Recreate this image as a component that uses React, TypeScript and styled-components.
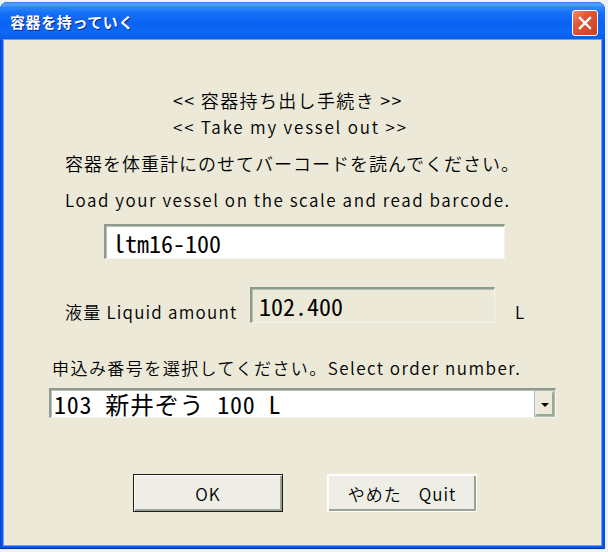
import React from "react";
import styled, { createGlobalStyle } from "styled-components";

const UI_FONT = `"Noto Sans CJK JP", "Noto Sans", sans-serif`;
const MONO_FONT = `"Noto Sans Mono CJK JP", "Noto Sans CJK JP", "Liberation Mono", monospace`;
const LABEL_WEIGHT = 350;

const GlobalStyle = createGlobalStyle`
  html, body { margin: 0; padding: 0; background: #eef1f5; }
  body { width: 608px; height: 552px; overflow: hidden; font-family: ${UI_FONT}; }
`;

const Window = styled.div`
  margin-top: 2px;
  width: 605px;
  height: 547px;
  box-sizing: border-box;
  display: flex;
  flex-direction: column;
  background: #0b56ee;
  border-radius: 8px 8px 0 0;
  box-shadow: inset 1px 0 #0a3fd0, inset -1px 0 #0a3fd0, inset 0 -1px #0030b8;
`;

const TitleBar = styled.div`
  height: 38px;
  flex: none;
  box-sizing: border-box;
  display: flex;
  align-items: center;
  justify-content: space-between;
  padding: 0 7px 0 10px;
  border-radius: 8px 8px 0 0;
  background: linear-gradient(
    to bottom,
    #2a7cf6 0%,
    #56a4ff 6%,
    #2d87fb 14%,
    #136ff6 30%,
    #0a63f2 55%,
    #0d68f5 80%,
    #0a5ae6 100%
  );
`;

const TitleText = styled.span`
  color: #fff;
  font-family: ${UI_FONT};
  font-weight: 700;
  font-size: 15px;
  letter-spacing: 0.6px;
  text-shadow: 1px 1px 0 #0a2a8c;
`;

const CloseButton = styled.div`
  width: 26px;
  height: 26px;
  box-sizing: border-box;
  margin-top: 4px;
  border: 1px solid #fff;
  border-radius: 3px;
  display: flex;
  align-items: center;
  justify-content: center;
  background: linear-gradient(135deg, #f08a6c 0%, #e0583a 35%, #cc4020 100%);
`;

const Client = styled.div`
  flex: 1;
  margin: 0 4px 4px 4px;
  background: #ece9d8;
  box-shadow: 0 0 0 1px #6ea0f6;
  display: flex;
  flex-direction: column;
  padding-top: 48px;
  box-sizing: border-box;
`;

const Heading = styled.div<{ $size: number; $spacing: number; $mt: number; $lh: number }>`
  padding-left: 169px;
  margin-top: ${(p) => p.$mt}px;
  font-family: ${UI_FONT};
  font-weight: ${LABEL_WEIGHT};
  font-size: ${(p) => p.$size}px;
  line-height: ${(p) => p.$lh}px;
  letter-spacing: ${(p) => p.$spacing}px;
  color: #000;
  white-space: nowrap;
`;

const Label = styled.div<{ $left: number; $mt: number; $size: number; $spacing: number; $width?: number }>`
  margin-left: ${(p) => p.$left}px;
  margin-top: ${(p) => p.$mt}px;
  ${(p) => (p.$width ? `width: ${p.$width}px; flex: none;` : "")}
  font-family: ${UI_FONT};
  font-weight: ${LABEL_WEIGHT};
  font-size: ${(p) => p.$size}px;
  line-height: 22px;
  letter-spacing: ${(p) => p.$spacing}px;
  color: #000;
  white-space: nowrap;
`;

const TextBox = styled.div<{ $left: number; $top: number; $width: number; $height: number; $readonly?: boolean }>`
  margin-left: ${(p) => p.$left}px;
  margin-top: ${(p) => p.$top}px;
  width: ${(p) => p.$width}px;
  height: ${(p) => p.$height}px;
  box-sizing: border-box;
  background: ${(p) => (p.$readonly ? "#ece9d8" : "#ffffff")};
  border-top: 2px solid #8c9c8c;
  border-left: 2px solid #8c9c8c;
  border-right: 1px solid #f4f3ee;
  border-bottom: 1px solid #f4f3ee;
  box-shadow: inset 1px 1px 0 #b8c2b4;
  display: flex;
  align-items: center;
  padding-left: 7px;
  font-family: ${MONO_FONT};
  font-size: 24px;
  color: #000;
  white-space: nowrap;
  flex: none;
  align-self: flex-start;
`;

const AmountRow = styled.div`
  display: flex;
  align-items: flex-end;
  margin-top: 28px;
  height: 36px;
`;

const UnitLabel = styled.span`
  margin-left: 20px;
  font-family: ${UI_FONT};
  font-weight: ${LABEL_WEIGHT};
  font-size: 17px;
  line-height: 22px;
  color: #000;
`;

const Dropdown = styled.div`
  margin-left: 45px;
  margin-top: 9px;
  width: 507px;
  height: 30px;
  box-sizing: border-box;
  background: #fff;
  border-top: 2px solid #8c9c8c;
  border-left: 2px solid #8c9c8c;
  border-right: 1px solid #f4f3ee;
  border-bottom: 1px solid #f4f3ee;
  box-shadow: inset 1px 1px 0 #b8c2b4;
  display: flex;
  align-items: center;
  justify-content: space-between;
  padding: 0 1px 0 3px;
`;

const DropdownText = styled.span`
  font-family: ${MONO_FONT};
  font-size: 24px;
  letter-spacing: 0.8px;
  color: #000;
  white-space: nowrap;
`;

const DropdownButton = styled.div`
  width: 19px;
  height: 25px;
  box-sizing: border-box;
  background: #ece9d8;
  border-top: 2px solid #e8ece4;
  border-left: 2px solid #e8ece4;
  border-right: 2px solid #9aa898;
  border-bottom: 2px solid #9aa898;
  outline: 1px solid #b4beb0;
  display: flex;
  align-items: center;
  justify-content: center;
`;

const Arrow = styled.div`
  width: 0;
  height: 0;
  margin-top: 2px;
  border-left: 4px solid transparent;
  border-right: 4px solid transparent;
  border-top: 4px solid #000;
`;

const ButtonRow = styled.div`
  display: flex;
  gap: 44px;
  margin-left: 129px;
  margin-top: 56px;
`;

const Button = styled.div<{ $default?: boolean }>`
  width: 150px;
  height: 38px;
  box-sizing: border-box;
  display: flex;
  align-items: center;
  justify-content: center;
  background: #efeee6;
  font-family: ${UI_FONT};
  font-weight: ${LABEL_WEIGHT};
  font-size: 17px;
  letter-spacing: 1px;
  color: #000;
  white-space: nowrap;
  border: 1px solid ${(p) => (p.$default ? "#1a1a1a" : "#ffffff")};
  box-shadow: inset 1px 1px 0 #ffffff, inset -2px -2px 0 #97a394;
`;

const ButtonGap = styled.span`
  display: inline-block;
  width: 17px;
`;

export default function App() {
  return (
    <>
      <GlobalStyle />
      <Window>
        <TitleBar>
          <TitleText>容器を持っていく</TitleText>
          <CloseButton>
            <svg width="14" height="14" viewBox="0 0 14 14">
              <path d="M2 2 L12 12 M12 2 L2 12" stroke="#fff" strokeWidth="2.4" strokeLinecap="square" />
            </svg>
          </CloseButton>
        </TitleBar>
        <Client>
          <Heading $size={18} $spacing={1.35} $mt={0} $lh={24}>
            {"<< 容器持ち出し手続き >>"}
          </Heading>
          <Heading $size={17} $spacing={1.8} $mt={4} $lh={22}>
            {"<< Take my vessel out >>"}
          </Heading>
          <Label $left={61} $mt={14} $size={18} $spacing={1.0}>
            容器を体重計にのせてバーコードを読んでください。
          </Label>
          <Label $left={61} $mt={15} $size={17} $spacing={1.55}>
            Load your vessel on the scale and read barcode.
          </Label>
          <TextBox $left={100} $top={13} $width={401} $height={35}>
            ltm16-100
          </TextBox>
          <AmountRow>
            <Label $left={61} $mt={0} $size={17} $spacing={1.2} $width={185}>
              液量 Liquid amount
            </Label>
            <TextBox $left={0} $top={0} $width={245} $height={36} $readonly>
              102.400
            </TextBox>
            <UnitLabel>L</UnitLabel>
          </AmountRow>
          <Label $left={48} $mt={34} $size={17} $spacing={1.45}>
            申込み番号を選択してください。Select order number.
          </Label>
          <Dropdown>
            <DropdownText>103 新井ぞう 100 L</DropdownText>
            <DropdownButton>
              <Arrow />
            </DropdownButton>
          </Dropdown>
          <ButtonRow>
            <Button $default>OK</Button>
            <Button>
              やめた<ButtonGap />Quit
            </Button>
          </ButtonRow>
        </Client>
      </Window>
    </>
  );
}
